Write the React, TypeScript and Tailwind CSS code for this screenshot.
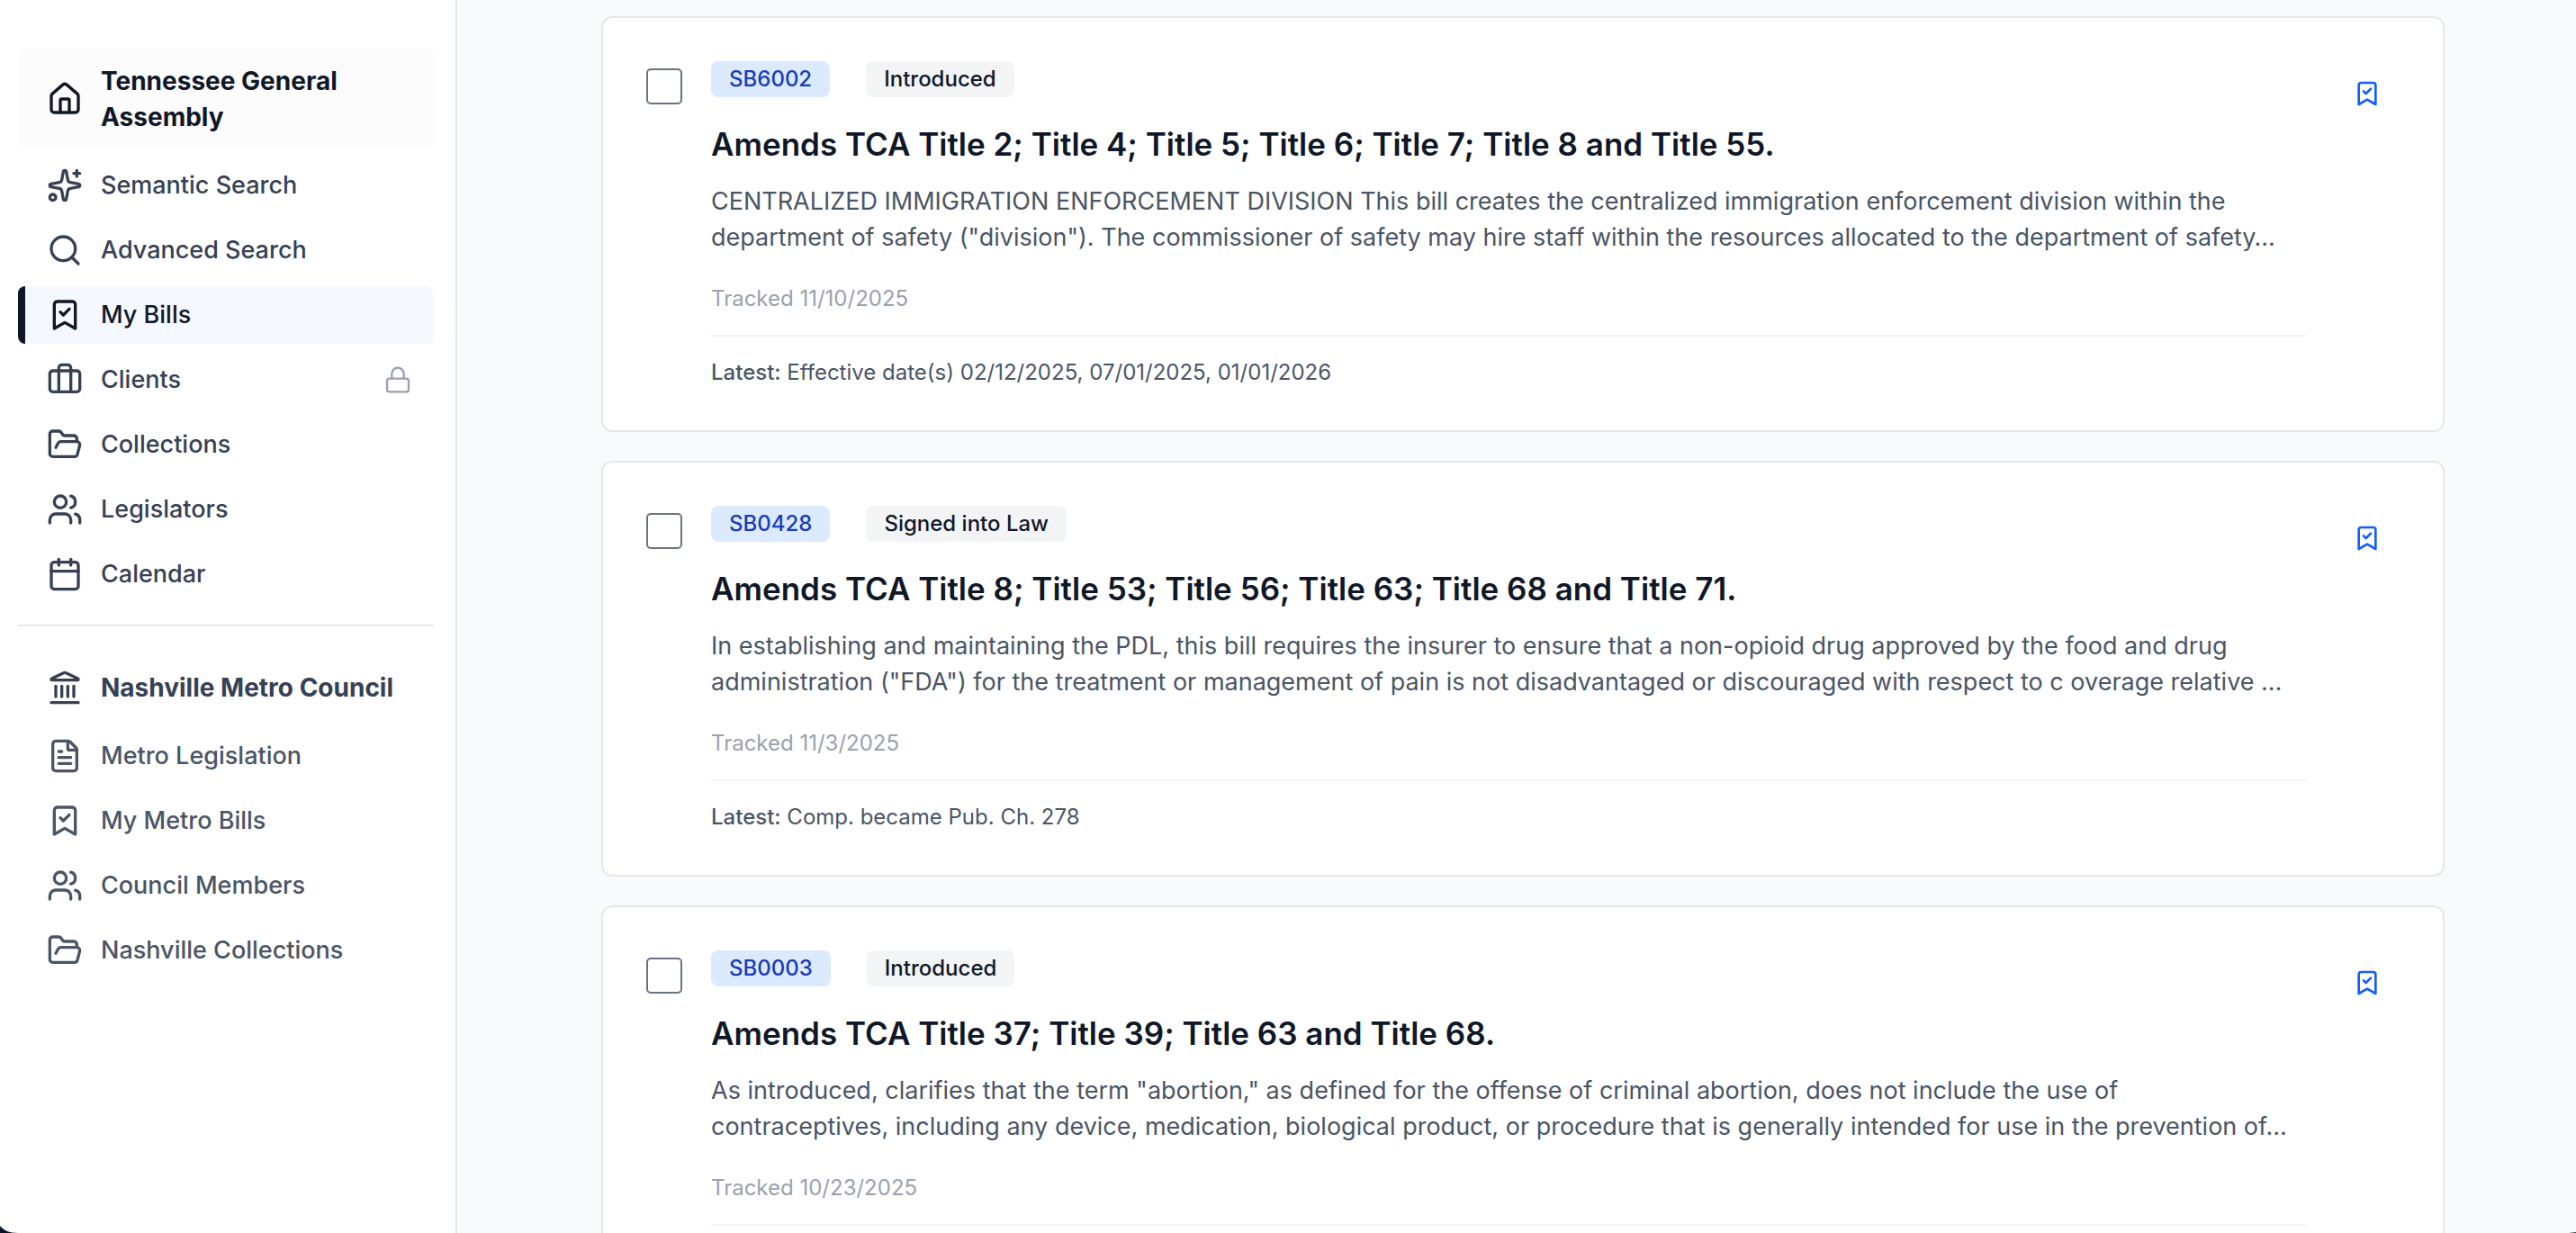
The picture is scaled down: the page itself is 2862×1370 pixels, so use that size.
import React, { useState } from 'react';
import {
    BookmarkCheck,
    Briefcase,
    Calendar,
    FileText,
    FolderOpen,
    House,
    Landmark,
    Lock,
    Search,
    Sparkles,
    Users,
    type LucideIcon,
} from 'lucide-react';

interface NavItem {
    label: string;
    icon: LucideIcon;
    locked?: boolean;
}

interface Bill {
    number: string;
    status: string;
    title: string;
    summary: string[];
    tracked: string;
    latest?: string;
}

const stateNav: NavItem[] = [
    { label: 'Semantic Search', icon: Sparkles },
    { label: 'Advanced Search', icon: Search },
    { label: 'My Bills', icon: BookmarkCheck },
    { label: 'Clients', icon: Briefcase, locked: true },
    { label: 'Collections', icon: FolderOpen },
    { label: 'Legislators', icon: Users },
    { label: 'Calendar', icon: Calendar },
];

const metroNav: NavItem[] = [
    { label: 'Metro Legislation', icon: FileText },
    { label: 'My Metro Bills', icon: BookmarkCheck },
    { label: 'Council Members', icon: Users },
    { label: 'Nashville Collections', icon: FolderOpen },
];

const bills: Bill[] = [
    {
        number: 'SB6002',
        status: 'Introduced',
        title: 'Amends TCA Title 2; Title 4; Title 5; Title 6; Title 7; Title 8 and Title 55.',
        summary: [
            'CENTRALIZED IMMIGRATION ENFORCEMENT DIVISION This bill creates the centralized immigration enforcement division within the',
            'department of safety ("division"). The commissioner of safety may hire staff within the resources allocated to the department of safety…',
        ],
        tracked: '11/10/2025',
        latest: 'Effective date(s) 02/12/2025, 07/01/2025, 01/01/2026',
    },
    {
        number: 'SB0428',
        status: 'Signed into Law',
        title: 'Amends TCA Title 8; Title 53; Title 56; Title 63; Title 68 and Title 71.',
        summary: [
            'In establishing and maintaining the PDL, this bill requires the insurer to ensure that a non-opioid drug approved by the food and drug',
            'administration ("FDA") for the treatment or management of pain is not disadvantaged or discouraged with respect to c overage relative …',
        ],
        tracked: '11/3/2025',
        latest: 'Comp. became Pub. Ch. 278',
    },
    {
        number: 'SB0003',
        status: 'Introduced',
        title: 'Amends TCA Title 37; Title 39; Title 63 and Title 68.',
        summary: [
            'As introduced, clarifies that the term "abortion," as defined for the offense of criminal abortion, does not include the use of',
            'contraceptives, including any device, medication, biological product, or procedure that is generally intended for use in the prevention of…',
        ],
        tracked: '10/23/2025',
    },
];

interface NavLinkProps {
    item: NavItem;
    active?: boolean;
    muted?: boolean;
}

const NavLink: React.FC<NavLinkProps> = ({ item, active, muted }) => {
    const Icon = item.icon;
    const color = active
        ? 'bg-[#f5f8ff] text-gray-900 border-gray-900'
        : muted
          ? 'text-gray-600 border-transparent'
          : 'text-gray-700 border-transparent';
    return (
        <a
            href="#"
            aria-current={active ? 'page' : undefined}
            className={`flex h-16 items-center gap-5 rounded-lg border-l-8 px-6 text-[27px] font-medium ${color}`}
        >
            <Icon className="size-10 shrink-0" />
            <span className="flex-1 whitespace-nowrap">{item.label}</span>
            {item.locked && <Lock className="size-8 shrink-0 text-gray-400" strokeWidth={1.75} />}
        </a>
    );
};

const Sidebar: React.FC = () => (
    <aside className="w-[508px] shrink-0 border-r-2 border-gray-200 bg-white pt-[54px] pr-6 pl-5">
        <nav className="flex flex-col gap-2">
            <a
                href="#"
                className="flex items-center gap-5 rounded-lg bg-[#fcfcfd] px-8 py-4 text-[28px] leading-10 font-bold text-gray-900"
            >
                <House className="size-10 shrink-0" />
                <span>
                    Tennessee General <br />
                    Assembly
                </span>
            </a>
            {stateNav.map((item) => (
                <NavLink key={item.label} item={item} active={item.label === 'My Bills'} />
            ))}
        </nav>
        <hr className="mt-6 mb-8 border-t-2 border-gray-200" />
        <nav className="flex flex-col gap-2">
            <a href="#" className="flex items-center gap-5 py-4 pl-8 text-[28px] leading-10 font-bold text-gray-700">
                <Landmark className="size-10 shrink-0" />
                <span className="whitespace-nowrap">Nashville Metro Council</span>
            </a>
            {metroNav.map((item) => (
                <NavLink key={item.label} item={item} muted />
            ))}
        </nav>
    </aside>
);

const BillCard: React.FC<{ bill: Bill }> = ({ bill }) => {
    const [selected, setSelected] = useState<boolean>(false);

    return (
        <article className="flex items-start gap-8 rounded-xl border-2 border-gray-200 bg-white p-12">
            <input
                type="checkbox"
                aria-label={`Select ${bill.number}`}
                checked={selected}
                onChange={(e) => setSelected(e.target.checked)}
                className="mt-2 size-10 shrink-0 appearance-none rounded-[5px] border-2 border-gray-500 bg-white checked:bg-blue-600"
            />
            <div className="min-w-0 flex-1">
                <div className="flex gap-10 text-2xl font-medium">
                    <span className="flex h-10 items-center rounded-lg bg-blue-100 px-5 text-blue-800">{bill.number}</span>
                    <span className="flex h-10 items-center rounded-lg bg-gray-100 px-5 text-gray-900">{bill.status}</span>
                </div>
                <h3 className="mt-6 text-[35px] leading-14 font-semibold text-gray-900">{bill.title}</h3>
                <p className="mt-4 text-[27px] leading-10 text-gray-600">
                    {bill.summary.map((line) => (
                        <span key={line} className="block truncate">{line}</span>
                    ))}
                </p>
                <p className="mt-8 text-2xl text-gray-400">Tracked {bill.tracked}</p>
                <div className="mt-6 border-t-2 border-gray-100 pt-6 text-2xl text-gray-600">
                    {bill.latest && (
                        <p>
                            <span className="font-medium">Latest:</span> {bill.latest}
                        </p>
                    )}
                </div>
            </div>
            <button aria-label={`Untrack ${bill.number}`} className="flex size-18 shrink-0 items-center justify-center rounded-lg text-blue-600">
                <BookmarkCheck className="size-8" />
            </button>
        </article>
    );
};

const App: React.FC = () => (
    <div className="relative flex h-screen overflow-hidden bg-[#f9fafc] font-['Inter',sans-serif]">
        <Sidebar />
        <main className="min-w-0 flex-1 pt-[18px] pl-3.5">
            <div className="mx-auto flex max-w-[2048px] flex-col gap-8">
                {bills.map((bill) => (
                    <BillCard key={bill.number} bill={bill} />
                ))}
            </div>
        </main>
        {/* rounded window corners */}
        <svg className="absolute bottom-0 left-0 h-2 w-5 text-[#0b1428]" viewBox="0 0 20 8" fill="currentColor" aria-hidden="true">
            <path d="M0 0C4 5 10 8 20 8H0Z" />
        </svg>
        <svg className="absolute right-0 bottom-0 h-px w-2 text-[#333]" viewBox="0 0 8 1" fill="currentColor" aria-hidden="true">
            <path d="M8 0V1H0Z" />
        </svg>
    </div>
);

export default App;
